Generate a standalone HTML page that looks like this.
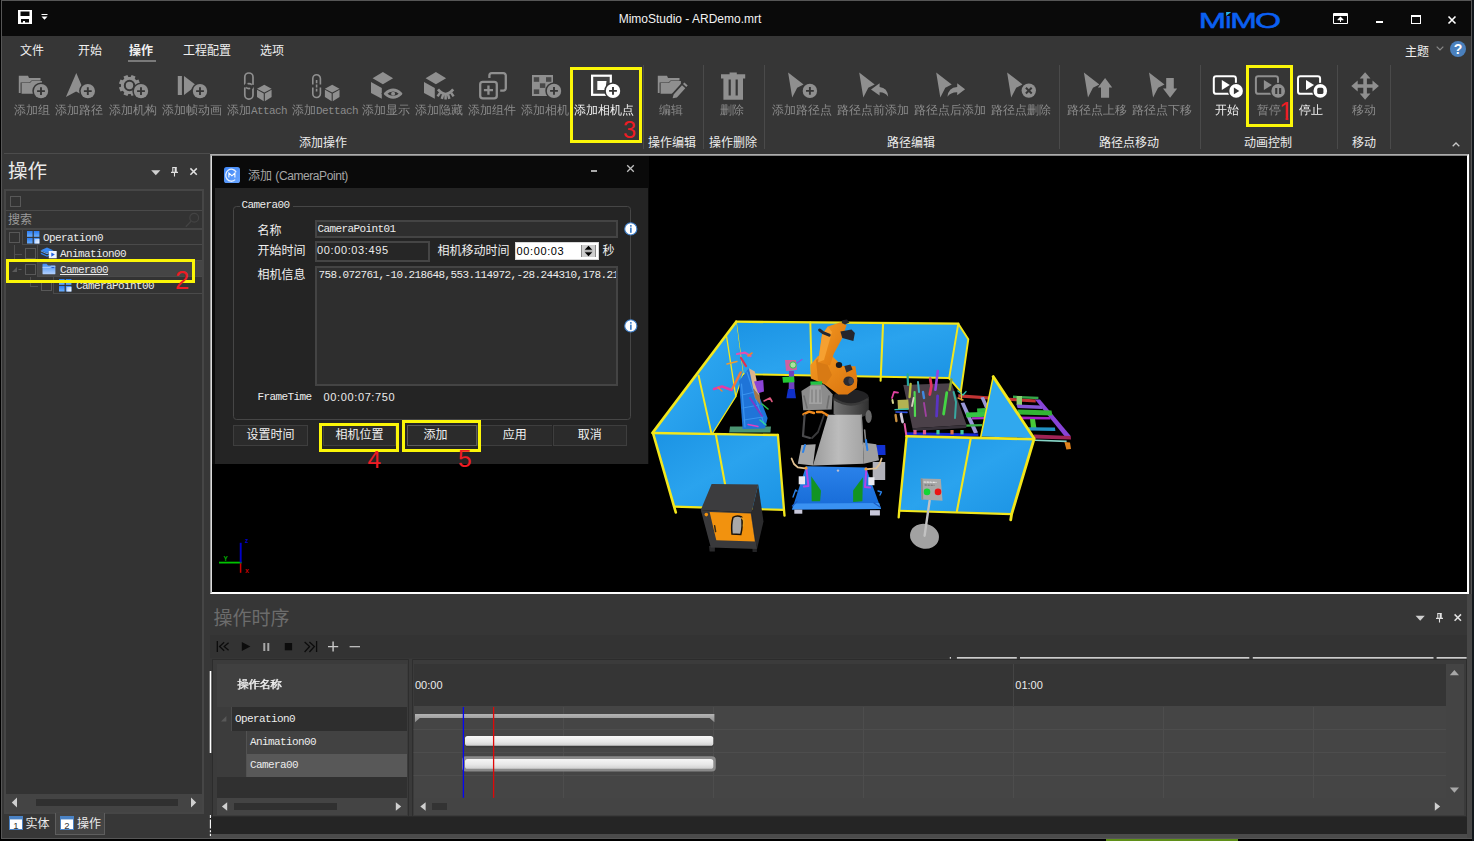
<!DOCTYPE html>
<html lang="zh-CN">
<head>
<meta charset="utf-8">
<title>MimoStudio - ARDemo.mrt</title>
<style>
*{box-sizing:border-box;margin:0;padding:0}
html,body{width:1474px;height:841px;overflow:hidden;background:#000}
body{position:relative;font-family:"Liberation Sans","Noto Sans CJK SC",sans-serif;font-size:12px;color:#e6e6e6;line-height:1}
.abs{position:absolute}
.cj{font-family:"Liberation Mono","WenQuanYi Zen Hei","Noto Sans CJK SC",monospace}
.mono{font-family:"Liberation Mono","WenQuanYi Zen Hei",monospace;font-size:11px;letter-spacing:-0.6px}
.lt{font-size:11px;letter-spacing:-0.6px}
#win{position:absolute;left:1px;top:0;width:1471px;height:839px;background:#353535;border:1px solid #565656}
/* everything inside #app is positioned in page coordinates */
#app{position:absolute;left:-2px;top:-1px;width:1474px;height:841px}
#titlebar{left:2px;top:1px;width:1469px;height:35px;background:#0a0a0a}
#ribbon{left:2px;top:36px;width:1469px;height:117px;background:#363636}
.tab{position:absolute;top:44px;height:14px;font-size:12px;line-height:14px;color:#f0f0f0;white-space:nowrap}
.rb{position:absolute;top:104px;height:14px;line-height:14px;font-size:12px;color:#8a8a8a;white-space:nowrap;transform:translateX(-50%);text-align:center}
.rb.on{color:#f2f2f2}
.gl{position:absolute;top:136px;height:14px;line-height:14px;font-size:12px;color:#ececec;white-space:nowrap;transform:translateX(-50%)}
.sep{position:absolute;top:65px;width:1px;height:84px;background:#4a4a4a}
.ybox{position:absolute;border:3px solid #fbf608}
.rnum{position:absolute;color:#ee1c24;font-family:"Liberation Sans",sans-serif;white-space:nowrap}

#left{left:2px;top:153px;width:208px;height:685px;background:#373737}
.cb{position:absolute;width:11px;height:11px;border:1px solid #585858;background:#333}
.hl{position:absolute;height:1px;background:#4a4a4a}
.vl{position:absolute;width:1px;background:#4a4a4a}
.tt{position:absolute;height:12px;line-height:12px;white-space:nowrap;color:#ececec}

.dl{position:absolute;height:14px;line-height:14px;font-size:12px;color:#f0f0f0;white-space:nowrap}
.btn{position:absolute;top:425px;height:21px;background:#2b2b2b;border:1px solid #3e3e3e;color:#f0f0f0;font-size:12px;line-height:19px;text-align:center}
.num{position:absolute;font-family:"Liberation Sans",sans-serif;font-size:11px;letter-spacing:0.62px;white-space:nowrap;height:12px;line-height:12px}
svg{position:absolute;overflow:visible}
</style>
</head>
<body>
<div class="abs" style="left:1106px;top:839px;width:132px;height:2px;background:#5f8f18"></div>
<div class="abs" style="left:1472px;top:0;width:2px;height:841px;background:#12171c"></div>
<div id="win"><div id="app">

<!-- TITLE BAR -->
<div id="titlebar" class="abs"></div>

<!-- save icon -->
<svg class="abs" style="left:18px;top:10px" width="14" height="14" viewBox="0 0 14 14"><path fill="#fff" fill-rule="evenodd" d="M0 0H14V14H0ZM2.5 1.5V6H11.5V1.5ZM3 9V12.5H5V11H7V12.5H11V9Z"/></svg>
<svg class="abs" style="left:41px;top:14px" width="7" height="6" viewBox="0 0 7 6"><path fill="#fff" d="M0.5 0H6.5V1H0.5ZM0.5 2.5H6.5L3.5 5.7Z"/></svg>
<div class="abs" style="left:540px;top:11px;width:300px;height:16px;line-height:16px;text-align:center;font-size:12px;color:#f2f2f2;white-space:nowrap">MimoStudio - ARDemo.mrt</div>
<!-- MiMO logo -->
<svg class="abs" style="left:1201px;top:8px" width="80" height="24" viewBox="0 0 80 24">
 <g font-family="Liberation Sans,sans-serif" font-size="22.3" fill="#0b60f2" stroke="#0b60f2" stroke-width="0.55">
  <text transform="translate(-2.2,20.2) scale(1.47,1)">M</text>
  <text transform="translate(24.4,20.2) scale(1.15,1)">i</text>
  <text transform="translate(29.3,20.2) scale(1.43,1)">M</text>
  <text transform="translate(53.9,20.2) scale(1.5,0.975)">O</text>
 </g>
 <rect x="24.3" y="3" width="6" height="4.9" fill="#0a0a0a"/>
 <path d="M25.1 4H30.2L25.1 8Z" fill="#25b4e8"/>
</svg>
<!-- window buttons -->
<svg class="abs" style="left:1333px;top:13px" width="15" height="11" viewBox="0 0 15 11"><path fill="none" stroke="#fff" stroke-width="1" d="M0.5 0.5H14.5V10.5H0.5Z"/><path fill="#fff" d="M1 1H14V3H1ZM7 4H8V9H7ZM4.5 6.5L7.5 3.5L10.5 6.5V7.2H4.5Z"/></svg>
<div class="abs" style="left:1376px;top:21px;width:7px;height:2px;background:#fff"></div>
<div class="abs" style="left:1411px;top:15px;width:10px;height:9px;border:1px solid #fff;border-top-width:2px"></div>
<svg class="abs" style="left:1448px;top:16px" width="8" height="8" viewBox="0 0 8 8"><path stroke="#fff" stroke-width="1.6" d="M0.5 0.5L7.5 7.5M7.5 0.5L0.5 7.5"/></svg>
<!--TITLE-CONTENT-->

<!-- RIBBON -->
<div id="ribbon" class="abs"></div>
<div class="tab" style="left:20px">文件</div>
<div class="tab" style="left:78px">开始</div>
<div class="tab" style="left:129px;font-weight:bold">操作</div>
<div class="tab" style="left:183px">工程配置</div>
<div class="tab" style="left:260px">选项</div>
<div class="abs" style="left:128px;top:60px;width:28px;height:2px;background:#7a7a7a"></div>
<div class="rb cj" style="left:32px">添加组</div>
<div class="rb cj" style="left:79px">添加路径</div>
<div class="rb cj" style="left:133px">添加机构</div>
<div class="rb cj" style="left:192px">添加帧动画</div>
<div class="rb cj" style="left:257px">添加<span class="lt">Attach</span></div>
<div class="rb cj" style="left:325px">添加<span class="lt">Dettach</span></div>
<div class="rb cj" style="left:386px">添加显示</div>
<div class="rb cj" style="left:439px">添加隐藏</div>
<div class="rb cj" style="left:492px">添加组件</div>
<div class="rb cj" style="left:545px">添加相机</div>
<div class="rb cj on" style="left:604px">添加相机点</div>
<div class="rb cj" style="left:671px">编辑</div>
<div class="rb cj" style="left:732px">删除</div>
<div class="rb cj" style="left:802px">添加路径点</div>
<div class="rb cj" style="left:873px">路径点前添加</div>
<div class="rb cj" style="left:950px">路径点后添加</div>
<div class="rb cj" style="left:1021px">路径点删除</div>
<div class="rb cj" style="left:1097px">路径点上移</div>
<div class="rb cj" style="left:1162px">路径点下移</div>
<div class="rb cj on" style="left:1227px">开始</div>
<div class="rb cj" style="left:1269px">暂停</div>
<div class="rb cj on" style="left:1311px">停止</div>
<div class="rb cj" style="left:1364px">移动</div>
<div class="gl" style="left:323px">添加操作</div>
<div class="gl" style="left:672px">操作编辑</div>
<div class="gl" style="left:733px">操作删除</div>
<div class="gl" style="left:911px">路径编辑</div>
<div class="gl" style="left:1129px">路径点移动</div>
<div class="gl" style="left:1268px">动画控制</div>
<div class="gl" style="left:1364px">移动</div>
<div class="sep" style="left:643px"></div>
<div class="sep" style="left:703px"></div>
<div class="sep" style="left:764px"></div>
<div class="sep" style="left:1059px"></div>
<div class="sep" style="left:1200px"></div>
<div class="sep" style="left:1337px"></div>
<div class="sep" style="left:1390px"></div>
<div class="abs" style="left:1405px;top:45px;height:14px;line-height:14px;font-size:12px;color:#f0f0f0">主题</div>
<svg class="abs" style="left:1436px;top:46px" width="8" height="5" viewBox="0 0 8 5"><path fill="none" stroke="#8a8a8a" stroke-width="1.2" d="M0.7 0.7L4 4L7.3 0.7"/></svg>
<svg class="abs" style="left:1450px;top:41px" width="16" height="16" viewBox="0 0 16 16"><circle cx="8" cy="8" r="8" fill="#4a80bd"/><text x="8" y="13" text-anchor="middle" font-family="Liberation Sans,sans-serif" font-weight="bold" font-size="14" fill="#fff">?</text></svg>
<svg class="abs" style="left:1452px;top:142px" width="8" height="5" viewBox="0 0 8 5"><path fill="none" stroke="#c8c8c8" stroke-width="1.3" d="M0.7 4.3L4 1L7.3 4.3"/></svg>
<div class="ybox" style="left:569.5px;top:67px;width:72.8px;height:75.5px"></div>
<div class="rnum" style="left:623px;top:118px;font-size:23.5px;line-height:24px">3</div>
<div class="ybox" style="left:1246px;top:65px;width:47.3px;height:62px"></div>
<div class="rnum" style="left:1279px;top:98px;font-size:25.5px;line-height:26px;clip-path:polygon(0 0,100% 0,100% 19.8px,9.4px 19.8px,9.4px 100%,6.6px 100%,6.6px 19.8px,0 19.8px)">1</div>
<!--RIBBON-ICONS-START-->
<svg class="abs" style="left:0;top:0" width="1474" height="160" viewBox="0 0 1474 160">
<g transform="translate(16,68)" fill="#8f8f8f"><path d="M2.8 25.1V7.8H12L13 9.9H24.5V12.4H15.5L13.6 14.4H4.6V25.1Z"/><path d="M5.6 15H13.9L15.8 13H25.9V25.8H5.6Z"/></g>
<circle cx="41" cy="91.1" r="8.7" fill="#363636"/><circle cx="41" cy="91.1" r="7.2" fill="#8f8f8f"/><path d="M37.1 91.1H44.9M41 87.19999999999999V95.0" stroke="#363636" stroke-width="1.9" fill="none"/>
<path fill="#8f8f8f" d="M76.3 73.1L65.9 97.1L76.1 91.6L86.5 97.1Z"/>
<circle cx="87.8" cy="91.1" r="8.7" fill="#363636"/><circle cx="87.8" cy="91.1" r="7.2" fill="#8f8f8f"/><path d="M83.89999999999999 91.1H91.7M87.8 87.19999999999999V95.0" stroke="#363636" stroke-width="1.9" fill="none"/>
<path fill="#8f8f8f" d="M131.61 74.91L135.50 76.52L134.72 78.66L136.34 80.28L138.48 79.50L140.09 83.39L138.02 84.36L138.02 86.64L140.09 87.61L138.48 91.50L136.34 90.72L134.72 92.34L135.50 94.48L131.61 96.09L130.64 94.02L128.36 94.02L127.39 96.09L123.50 94.48L124.28 92.34L122.66 90.72L120.52 91.50L118.91 87.61L120.98 86.64L120.98 84.36L118.91 83.39L120.52 79.50L122.66 80.28L124.28 78.66L123.50 76.52L127.39 74.91L128.36 76.98L130.64 76.98Z"/><circle cx="129.5" cy="85.5" r="4.7" fill="#8f8f8f" stroke="#363636" stroke-width="2"/>
<circle cx="141" cy="91.1" r="8.7" fill="#363636"/><circle cx="141" cy="91.1" r="7.2" fill="#8f8f8f"/><path d="M137.1 91.1H144.9M141 87.19999999999999V95.0" stroke="#363636" stroke-width="1.9" fill="none"/>
<path fill="#8f8f8f" d="M177.8 76H181.9V95H177.8ZM184 76L196.5 85.5L184 95Z"/>
<circle cx="200" cy="91.1" r="8.7" fill="#363636"/><circle cx="200" cy="91.1" r="7.2" fill="#8f8f8f"/><path d="M196.1 91.1H203.9M200 87.19999999999999V95.0" stroke="#363636" stroke-width="1.9" fill="none"/>
<g fill="none" stroke="#8f8f8f" stroke-width="1.7"><rect x="244.8" y="73" width="8.2" height="15.6" rx="4.1"/><rect x="244.8" y="83.6" width="8.2" height="15.6" rx="4.1"/></g><path d="M244.8 87.4A4.1 4.1 0 0 1 247.6 83.9" stroke="#363636" stroke-width="2.6" fill="none"/><path d="M253 84.8A4.1 4.1 0 0 1 250.2 88.3" stroke="#363636" stroke-width="2.6" fill="none"/>
<path fill="#8f8f8f" d="M264.3 84.8L271.6 88.7L264.3 92.6L257.0 88.7ZM257.0 89.8L263.75 93.5V101.19999999999999L257.0 97.10000000000001ZM271.6 89.8L264.85 93.5V101.19999999999999L271.6 97.10000000000001Z"/>
<g fill="none" stroke="#8f8f8f" stroke-width="1.6"><path d="M312.8 84.5V78.6A3.8 3.8 0 0 1 320.4 78.6V84.5"/><path d="M312.8 87.4V93.7A3.8 3.8 0 0 0 320.4 93.7V87.4"/><path d="M316.6 80V91.6" stroke-dasharray="3.2 1.2"/></g>
<path fill="#8f8f8f" d="M332.2 84.8L339.5 88.7L332.2 92.6L324.9 88.7ZM324.9 89.8L331.65 93.5V101.19999999999999L324.9 97.10000000000001ZM339.5 89.8L332.75 93.5V101.19999999999999L339.5 97.10000000000001Z"/>
<path fill="#8f8f8f" d="M382.9 71.9L393.1 78.3L382.9 84.2L372.6 78.3ZM371 82.1L381.8 88V98.8L371 93Z"/>
<path d="M383 93.7Q393.1 83.5 403.2 93.7Q393.1 103.9 383 93.7Z" fill="#363636" stroke="#363636" stroke-width="2.4"/><path d="M385.2 93.7Q393.1 86.3 401 93.7Q393.1 101.1 385.2 93.7Z" fill="none" stroke="#8f8f8f" stroke-width="2.7" stroke-linejoin="round"/><circle cx="393.1" cy="93.7" r="2" fill="#8f8f8f"/>
<path fill="#8f8f8f" d="M435.9 71.9L446.1 78.3L435.9 84.2L425.6 78.3ZM424 82.1L434.8 88V98.8L424 93Z"/>
<g fill="none" stroke="#8f8f8f" stroke-width="2.5" stroke-linecap="butt"><path d="M438 89.4Q445.6 98.6 453.2 89.4" stroke-width="2.7"/><path d="M440.2 92.6L437.6 96.4M443.2 94.4L441.8 98.8M445.6 95V99.6M448 94.4L449.4 98.8M451 92.6L453.6 96.4"/></g>
<g fill="none" stroke="#8f8f8f" stroke-width="2.3"><rect x="480.2" y="81.9" width="16.6" height="16.4" rx="2.6"/><path d="M489.4 78V75.6A2.4 2.4 0 0 1 491.8 73.2H503.4A2.4 2.4 0 0 1 505.8 75.6V88.2A2.4 2.4 0 0 1 503.4 90.6H500.2"/><path d="M483.9 90.1H493M488.45 85.5V94.7" stroke-width="2.3"/></g>
<rect x="532" y="75" width="21" height="21" fill="#8f8f8f"/><rect x="533.8" y="77.2" width="5.4" height="4.6" fill="#484848"/><rect x="546.0" y="77.2" width="5.4" height="4.6" fill="#484848"/><rect x="539.9" y="83.3" width="5.4" height="4.6" fill="#484848"/><rect x="533.8" y="89.4" width="5.4" height="4.6" fill="#484848"/><rect x="546.0" y="89.4" width="5.4" height="4.6" fill="#484848"/>
<circle cx="554" cy="90.9" r="8.7" fill="#363636"/><circle cx="554" cy="90.9" r="7.2" fill="#8f8f8f"/><path d="M550.1 90.9H557.9M554 87.0V94.80000000000001" stroke="#363636" stroke-width="1.9" fill="none"/>
<rect x="592.1" y="75.7" width="18.7" height="19.1" fill="#454545" stroke="#ffffff" stroke-width="2.2"/><path fill="#ffffff" d="M597.3 80.9H606.5L605.4 89.9H597.3Z"/>
<circle cx="613" cy="90.9" r="8.7" fill="#363636"/><circle cx="613" cy="90.9" r="7.2" fill="#ffffff"/><path d="M609.1 90.9H616.9M613 87.0V94.80000000000001" stroke="#363636" stroke-width="1.9" fill="none"/>
<g transform="translate(655,68)" fill="#8f8f8f"><path d="M2.8 25.1V7.8H12L13 9.9H24.5V12.4H15.5L13.6 14.4H4.6V25.1Z"/><path d="M5.6 15H13.9L15.8 13H25.9V25.8H5.6Z"/></g>
<path d="M672.2 98.6L686.3 83.2" stroke="#363636" stroke-width="7" fill="none"/><path d="M672.6 98.2L673.6 94.4L682 85.2L685.3 88.2L676.9 97.4ZM683 84.1L684.4 82.6L687.7 85.6L686.3 87.1Z" fill="#8f8f8f"/>
<path fill="#8f8f8f" fill-rule="evenodd" d="M721 74.2H729.6V72.4H736.8V74.2H745.2V78.4H721ZM723.4 78.4H743V99.7H723.4ZM728.6 79.6V95.5H730.8V79.6ZM735.6 79.6V95.5H737.8V79.6Z"/>
<path fill="#8f8f8f" d="M788.1 72.4L803.6 84.4L797.2 87.7L792.2 97.4Z"/>
<circle cx="809.9" cy="90.9" r="8.7" fill="#363636"/><circle cx="809.9" cy="90.9" r="7.2" fill="#8f8f8f"/><path d="M806.0 90.9H813.8M809.9 87.0V94.80000000000001" stroke="#363636" stroke-width="1.9" fill="none"/>
<path fill="#8f8f8f" d="M859.2 72.4L874.7 84.4L868.3000000000001 87.7L863.3000000000001 97.4Z"/>
<path d="M871 89.5L879.6 83.3V86.9Q887.6 87.6 888.2 96.8Q885.2 92.2 879.6 92.3V95.6Z" fill="#8f8f8f" stroke="#363636" stroke-width="1.4" paint-order="stroke"/>
<path fill="#8f8f8f" d="M936.2 72.4L951.7 84.4L945.3000000000001 87.7L940.3000000000001 97.4Z"/>
<path d="M965.1 89.2L957.2 83.3V86.9Q948.2 87.4 947.4 96.8Q950.6 92.2 957.2 92.3V95.3Z" fill="#8f8f8f" stroke="#363636" stroke-width="1.4" paint-order="stroke"/>
<path fill="#8f8f8f" d="M1007.1 72.4L1022.6 84.4L1016.2 87.7L1011.2 97.4Z"/>
<circle cx="1028.8" cy="90.6" r="8.7" fill="#363636"/><circle cx="1028.8" cy="90.6" r="7.2" fill="#8f8f8f"/><path d="M1025.8999999999999 87.69999999999999L1031.7 93.5M1031.7 87.69999999999999L1025.8999999999999 93.5" stroke="#363636" stroke-width="2" fill="none"/>
<path fill="#8f8f8f" d="M1083.9 72.4L1099.4 84.4L1093.0 87.7L1088.0 97.4Z"/>
<path d="M1105.1 78.1L1112.2 87.6H1109.1V97.7H1101V87.6H1097.9Z" fill="#8f8f8f" stroke="#363636" stroke-width="1.6" paint-order="stroke"/>
<path fill="#8f8f8f" d="M1149 72.4L1164.5 84.4L1158.1 87.7L1153.1 97.4Z"/>
<path d="M1166.2 78H1173.8V88.5H1177.2L1170.1 97.8L1163 88.5H1166.2Z" fill="#8f8f8f" stroke="#363636" stroke-width="1.6" paint-order="stroke"/>
<rect x="1213.8" y="76.2" width="22.1" height="17.6" rx="2.4" fill="none" stroke="#ffffff" stroke-width="2"/><path fill="#ffffff" d="M1221.8 80L1229.8 85L1221.8 90Z"/><circle cx="1236.1" cy="90.9" r="8.2" fill="#363636"/><circle cx="1236.1" cy="90.9" r="6.8" fill="#ffffff"/><path fill="#363636" d="M1233.8999999999999 87.60000000000001L1239.3 90.9L1233.8999999999999 94.2Z"/>
<rect x="1255.9" y="76.2" width="22.1" height="17.6" rx="2.4" fill="none" stroke="#8f8f8f" stroke-width="2"/><path fill="#8f8f8f" d="M1263.9 80L1271.9 85L1263.9 90Z"/><circle cx="1278.2" cy="90.9" r="8.2" fill="#363636"/><circle cx="1278.2" cy="90.9" r="6.8" fill="#8f8f8f"/><path fill="#363636" d="M1275.2 87.9H1277.3V93.9H1275.2ZM1279.1000000000001 87.9H1281.2V93.9H1279.1000000000001Z"/>
<rect x="1298" y="76.2" width="22.1" height="17.6" rx="2.4" fill="none" stroke="#ffffff" stroke-width="2"/><path fill="#ffffff" d="M1306 80L1314 85L1306 90Z"/><circle cx="1320.3" cy="90.9" r="8.2" fill="#363636"/><circle cx="1320.3" cy="90.9" r="6.8" fill="#ffffff"/><rect x="1317.2" y="87.80000000000001" width="6.2" height="6.2" rx="1.6" fill="#363636"/>
<path fill="#8f8f8f" d="M1365.1 72.2L1370.5 78.6H1366.8999999999999V84.2H1372.5V80.6L1378.8999999999999 86L1372.5 91.4V87.8H1366.8999999999999V93.4H1370.5L1365.1 99.8L1359.6999999999998 93.4H1363.3V87.8H1357.6999999999998V91.4L1351.3 86L1357.6999999999998 80.6V84.2H1363.3V78.6H1359.6999999999998Z"/>
</svg>
<!--RIBBON-ICONS-END-->
<!--RIBBON-CONTENT-->

<!-- LEFT PANEL -->

<svg width="0" height="0" style="left:0;top:0"><defs>
<linearGradient id="gb" x1="0" y1="0" x2="0" y2="1"><stop offset="0" stop-color="#2a7cf2"/><stop offset="1" stop-color="#6aaeff"/></linearGradient>
<linearGradient id="gf" x1="0" y1="0" x2="0" y2="1"><stop offset="0" stop-color="#3f8df6"/><stop offset="1" stop-color="#b5d2ff"/></linearGradient>
<linearGradient id="gw" x1="0" y1="0" x2="1" y2="1"><stop offset="0" stop-color="#9cc4ff"/><stop offset="1" stop-color="#ffffff"/></linearGradient>
</defs></svg>
<div id="left" class="abs"></div>
<div class="hl" style="left:4px;top:153px;width:206px;background:#4c4c4c"></div>
<div class="abs" style="left:8px;top:160px;font-size:19.5px;line-height:22px;color:#eaeaea;white-space:nowrap">操作</div>
<svg style="left:150px;top:165px" width="50" height="14" viewBox="0 0 50 14">
 <path d="M1.2 5.2H10.4L5.8 10.2Z" fill="#d0d0d0"/>
 <path d="M22.2 2.5H26.8M22.8 2.5V7.2M26.2 2.5V7.2M25.2 2.5V7.2M21 7.4H28M24.5 7.4V11.6" stroke="#e0e0e0" stroke-width="1.1" fill="none"/>
 <path d="M40.4 3.4L46.8 9.8M46.8 3.4L40.4 9.8" stroke="#e0e0e0" stroke-width="1.5" fill="none"/>
</svg>
<!-- tree box -->
<div class="abs" style="left:4px;top:189px;width:200px;height:625px;border:2px solid #464646;background:#333"></div>
<div class="cb" style="left:10px;top:196px"></div>
<div class="hl" style="left:6px;top:210px;width:196px"></div>
<div class="tt" style="left:8px;top:214px;color:#9a9a9a">搜索</div>
<svg style="left:185px;top:212px" width="15" height="16" viewBox="0 0 15 16"><circle cx="9.2" cy="5.8" r="4.4" fill="none" stroke="#434343" stroke-width="1.2"/><path d="M6 9.2L0.8 14.8" stroke="#434343" stroke-width="1.4"/></svg>
<div class="hl" style="left:6px;top:228px;width:196px;height:2px;background:#464646"></div>
<!-- row 1 -->
<div class="cb" style="left:9px;top:232px"></div>
<div class="vl" style="left:22px;top:230px;height:15px"></div>
<div class="hl" style="left:22px;top:244px;width:180px"></div>
<svg style="left:26.8px;top:230.6px" width="13" height="13" viewBox="0 0 13 13"><rect x="0" y="0" width="5.6" height="5.8" fill="url(#gb)"/><rect x="6.8" y="0" width="5.6" height="5.8" fill="url(#gb)"/><rect x="0" y="6.9" width="5.6" height="5.6" fill="url(#gb)"/><rect x="6.8" y="6.9" width="5.6" height="5.6" fill="#4a92f5"/><rect x="7.6" y="8" width="4.8" height="4.5" fill="url(#gw)"/></svg>

<div class="tt mono" style="left:43px;top:232px">Operation0</div>
<!-- row 2 -->
<div class="vl" style="left:14px;top:245px;height:16px;background:#505050"></div>
<div class="hl" style="left:14px;top:254px;width:8px;background:#505050"></div>
<div class="cb" style="left:25px;top:248px"></div>
<div class="vl" style="left:37px;top:245px;height:16px"></div>
<div class="hl" style="left:37px;top:260px;width:165px"></div>
<svg style="left:40px;top:247px" width="18" height="12" viewBox="0 0 18 12"><path d="M0.8 3.2L7 0.4L13.2 3.2L7 6Z" fill="#3a8af5"/><path d="M0.8 5.6L7 8.4L13.2 5.6V7L7 9.8L0.8 7Z" fill="#2f80f0"/><path d="M0.8 3.9L7 6.7L13.2 3.9" fill="none" stroke="#6aaeff" stroke-width="0.9"/><rect x="8.8" y="4" width="7.9" height="7.3" fill="#eef4ff"/><path d="M11.3 5.4L14.8 7.6L11.3 9.8Z" fill="#1f5fe0"/></svg>

<div class="tt mono" style="left:60px;top:248px">Animation00</div>
<!-- row 3 selected -->
<div class="abs" style="left:38px;top:261px;width:164px;height:16px;background:#454545"></div>
<svg style="left:12px;top:267px" width="10" height="6" viewBox="0 0 10 6"><path d="M0 5L5 0V5Z" fill="#5a5a5a"/><path d="M6.5 2.5H9.5" stroke="#5a5a5a" stroke-width="1"/></svg>
<div class="cb" style="left:25px;top:264px"></div>
<div class="vl" style="left:37px;top:261px;height:16px"></div>
<div class="hl" style="left:37px;top:276px;width:165px"></div>
<svg style="left:42px;top:263px" width="14" height="12" viewBox="0 0 14 12"><path d="M0.5 1.6Q0.5 0.7 1.4 0.7H4.6L6 2.4H12.6Q13.4 2.4 13.4 3.2V10.4Q13.4 11.3 12.6 11.3H1.4Q0.5 11.3 0.5 10.4Z" fill="url(#gf)"/><path d="M0.5 4.4H8L9.4 3.2H13.4" fill="none" stroke="#d6e6ff" stroke-width="0.8" opacity="0.8"/><path d="M9.6 4.6H12.2" stroke="#1f55d0" stroke-width="1"/></svg>

<div class="tt mono" style="left:60px;top:264px;text-decoration:underline;text-underline-offset:1px">Camera00</div>
<!-- row 4 -->
<div class="vl" style="left:30px;top:277px;height:10px;background:#505050"></div>
<div class="hl" style="left:30px;top:286px;width:8px;background:#505050"></div>
<div class="cb" style="left:41px;top:280px"></div>
<div class="vl" style="left:53px;top:277px;height:17px"></div>
<div class="hl" style="left:53px;top:293px;width:149px"></div>
<svg style="left:59px;top:278.6px" width="13" height="13" viewBox="0 0 13 13"><rect x="0" y="0" width="5.6" height="5.8" fill="url(#gb)"/><rect x="6.8" y="0" width="5.6" height="5.8" fill="url(#gb)"/><rect x="0" y="6.9" width="5.6" height="5.6" fill="url(#gb)"/><rect x="6.8" y="6.9" width="5.6" height="5.6" fill="#4a92f5"/><rect x="7.6" y="8" width="4.8" height="4.5" fill="url(#gw)"/></svg>

<div class="tt mono" style="left:76px;top:280px">CameraPoint00</div>
<div class="ybox" style="left:6px;top:259px;width:189px;height:23.5px"></div>
<div class="rnum" style="left:175px;top:267px;font-size:25.5px;line-height:26px">2</div>
<!-- h scroll -->
<div class="abs" style="left:6px;top:794px;width:196px;height:18px;background:#444"></div>
<div class="abs" style="left:36px;top:799px;width:142px;height:7px;background:#303030"></div>
<svg style="left:11px;top:797px" width="186" height="11" viewBox="0 0 186 11"><path d="M6 0.5V10.5L0.8 5.5Z" fill="#d0d0d0"/><path d="M180 0.5V10.5L185.2 5.5Z" fill="#d0d0d0"/></svg>
<!-- tabs -->
<div class="abs" style="left:55px;top:813px;width:50px;height:22px;background:#444;border:1px solid #5e5e5e;border-top:none"></div>
<svg style="left:9px;top:816px" width="66" height="14" viewBox="0 0 66 14"><rect x="0.5" y="0.5" width="13" height="13" fill="#fff" stroke="#4a82c4"/><rect x="0" y="0" width="14" height="3.4" fill="#4a82c4"/><text x="7" y="12.6" text-anchor="middle" font-family="Liberation Sans,sans-serif" font-size="9.5" fill="#333">1</text>
<rect x="51.5" y="0.5" width="13" height="13" fill="#fff" stroke="#4a82c4"/><rect x="51" y="0" width="14" height="3.4" fill="#4a82c4"/><text x="58" y="12.6" text-anchor="middle" font-family="Liberation Sans,sans-serif" font-size="9.5" fill="#333">2</text></svg>

<div class="tt" style="left:25.5px;top:818px">实体</div>
<div class="tt" style="left:77px;top:818px">操作</div>
<!--LEFT-CONTENT-->

<!-- VIEWPORT -->

<div class="abs" style="left:210px;top:154px;width:1259px;height:440px;background:#000;border-style:solid;border-width:2px;border-color:#acacac #fff #fff #9a9a9a"></div>
<div class="abs" style="left:211px;top:155px;width:1256px;height:437px;border-top:1px solid #858585;border-left:1px solid #dcdcdc"></div>
<!--SCENE-START-->
<svg style="left:640px;top:300px;filter:blur(0.35px)" width="460" height="270" viewBox="640 300 460 270">
<defs>
<linearGradient id="sb1" x1="0" y1="0" x2="1" y2="1"><stop offset="0" stop-color="#1b93e4"/><stop offset="0.5" stop-color="#2aa3ee"/><stop offset="1" stop-color="#1b93e4"/></linearGradient>
<linearGradient id="sb2" x1="0" y1="0" x2="0" y2="1"><stop offset="0" stop-color="#2ba6f0"/><stop offset="1" stop-color="#1c94e4"/></linearGradient>
<linearGradient id="sgray" x1="0" y1="0" x2="1" y2="0"><stop offset="0" stop-color="#9c9c9c"/><stop offset="0.5" stop-color="#bcbcbc"/><stop offset="1" stop-color="#a4a4a4"/></linearGradient>
<linearGradient id="scyl" x1="0" y1="0" x2="1" y2="0"><stop offset="0" stop-color="#707070"/><stop offset="0.45" stop-color="#565656"/><stop offset="1" stop-color="#303030"/></linearGradient>
<linearGradient id="sor" x1="0" y1="0" x2="1" y2="1"><stop offset="0" stop-color="#f59a22"/><stop offset="1" stop-color="#d9730e"/></linearGradient>
<linearGradient id="sblue" x1="0" y1="0" x2="0" y2="1"><stop offset="0" stop-color="#2a82ea"/><stop offset="1" stop-color="#166ad6"/></linearGradient>
</defs>
<polygon points="736.2,321.7 958.3,323.7 949.1,378.3 743,374" fill="url(#sb1)" />
<path d="M736.2 321.7L958.3 323.7" fill="none" stroke="#f3e71c" stroke-width="2.34" stroke-linejoin="round" stroke-linecap="round" />
<path d="M743 374.2L949.1 378" fill="none" stroke="#f3e71c" stroke-width="1.95" stroke-linejoin="round" stroke-linecap="round" />
<path d="M736.2 321.7L743 374" fill="none" stroke="#f3e71c" stroke-width="1.17" stroke-linejoin="round" stroke-linecap="round" />
<path d="M810.3 322.4L811.8 377" fill="none" stroke="#f3e71c" stroke-width="1.95" stroke-linejoin="round" stroke-linecap="round" />
<path d="M883.1 323L880.6 380.8" fill="none" stroke="#f3e71c" stroke-width="2.08" stroke-linejoin="round" stroke-linecap="round" />
<polygon points="958.3,323.7 968.3,339.2 960.8,391.6 949.1,378.3" fill="#31a9f0" />
<path d="M958.3 323.7L968.3 339.2L960.8 391.6L949.1 378.3L958.3 323.7" fill="none" stroke="#f3e71c" stroke-width="1.95" stroke-linejoin="round" stroke-linecap="round" />
<polygon points="736.2,321.7 652.5,432.9 712.9,432.9 735.8,396.6 743,374" fill="url(#sb1)" />
<path d="M736.2 321.7L652.5 432.9" fill="none" stroke="#f3e71c" stroke-width="2.6" stroke-linejoin="round" stroke-linecap="round" />
<path d="M726.6 336.6L735.8 396.6" fill="none" stroke="#f3e71c" stroke-width="1.3" stroke-linejoin="round" stroke-linecap="round" />
<path d="M698.6 375.8L711.3 432.9" fill="none" stroke="#f3e71c" stroke-width="1.95" stroke-linejoin="round" stroke-linecap="round" />
<path d="M743 374L735.8 396.6L712.9 432.9" fill="none" stroke="#f3e71c" stroke-width="1.17" stroke-linejoin="round" stroke-linecap="round" />
<polygon points="730,426.4 771,426.4 770.4,432.6 729.2,432.6" fill="#4b9472" />
<polygon points="739,381 748.6,368.6 767.6,418 765,428.4 742.6,429" fill="#1f74d8" />
<path d="M741.5 384L745 427" fill="none" stroke="#3a94f0" stroke-width="1.2" stroke-linejoin="round" stroke-linecap="round" />
<path d="M747 372L764 424" fill="none" stroke="#3a94f0" stroke-width="1.2" stroke-linejoin="round" stroke-linecap="round" />
<path d="M742 395L755 392" fill="none" stroke="#3a94f0" stroke-width="1" stroke-linejoin="round" stroke-linecap="round" />
<path d="M743 408L759 405" fill="none" stroke="#3a94f0" stroke-width="1" stroke-linejoin="round" stroke-linecap="round" />
<path d="M744 420L763 417" fill="none" stroke="#3a94f0" stroke-width="1" stroke-linejoin="round" stroke-linecap="round" />
<polygon points="749,368.3 754.8,371.6 759.8,396.6 753.2,388.3" fill="#dcb48e" />
<polygon points="753.2,388.3 759.8,396.6 760.6,405 755,398" fill="#a87848" />
<polygon points="754,381.6 763.2,380 764,391.6 758.2,393.3" fill="#8c44d6" />
<path d="M714 389L722 386.5L731.6 390" fill="none" stroke="#e23ca6" stroke-width="2.6" stroke-linejoin="round" stroke-linecap="round" />
<path d="M718 387.5L722 391" fill="none" stroke="#f08030" stroke-width="1.4" stroke-linejoin="round" stroke-linecap="round" />
<path d="M732.4 388.5L740.7 372.4" fill="none" stroke="#f2743c" stroke-width="2.4" stroke-linejoin="round" stroke-linecap="round" />
<path d="M727 364L737 361.5" fill="none" stroke="#f09a30" stroke-width="1.4" stroke-linejoin="round" stroke-linecap="round" />
<path d="M737 354L745 352.6L750.6 356" fill="none" stroke="#e050b0" stroke-width="2.2" stroke-linejoin="round" stroke-linecap="round" />
<path d="M741 358L746 366" fill="none" stroke="#e03050" stroke-width="2.2" stroke-linejoin="round" stroke-linecap="round" />
<path d="M748 356L752 353" fill="none" stroke="#f08030" stroke-width="1.6" stroke-linejoin="round" stroke-linecap="round" />
<path d="M764 401L770 398L772 401.5" fill="none" stroke="#e05a80" stroke-width="1.6" stroke-linejoin="round" stroke-linecap="round" />
<path d="M762 404L768 409" fill="none" stroke="#30c050" stroke-width="1.6" stroke-linejoin="round" stroke-linecap="round" />
<path d="M760 420L766 425" fill="none" stroke="#30d0a0" stroke-width="1.6" stroke-linejoin="round" stroke-linecap="round" />
<path d="M748 424.5L758 426.5" fill="none" stroke="#e040c0" stroke-width="1.4" stroke-linejoin="round" stroke-linecap="round" />
<path d="M750 398L762 416" fill="none" stroke="#7a3cc8" stroke-width="2" stroke-linejoin="round" stroke-linecap="round" />
<polygon points="785,360 796,360 797,370 786,371" fill="#d060a0" />
<circle cx="793" cy="365" r="3.2" fill="#b0e0a0" stroke="#30c050" stroke-width="1"/>
<path d="M797 363L802 359.5" fill="none" stroke="#9050e0" stroke-width="1.2" stroke-linejoin="round" stroke-linecap="round" />
<polygon points="789,371 794,371 794.6,394 788.6,394" fill="#7040c0" />
<polygon points="782.4,377 794,376.4 794.4,382.2 783,382.8" fill="#22c832" />
<polygon points="788,389 794.6,389 796,398.2 786.4,398.2" fill="#1030c8" />
<path d="M833.6 397V414Q850 424 868.8 414V397Z" fill="url(#scyl)"/>
<ellipse cx="868.6" cy="416.5" rx="3.2" ry="6.5" fill="#6a6a6a"/>
<ellipse cx="851" cy="397" rx="17.6" ry="7.6" fill="#222224"/>
<path d="M834 399Q851 410 868 399" fill="none" stroke="#3a3a3a" stroke-width="2.4"/>
<polygon points="810.3,364.9 818,356 829.2,353.2 842.3,366 855.4,366.2 857.4,380 856.7,388 847.6,394.4 838.4,394.4 824,384 810.9,378.4" fill="url(#sor)" />
<polygon points="816,360 824,356 832,375 826,384 818,380" fill="#d87a14" />
<polygon points="827.9,326.4 840.4,322.2 846.6,325 842.3,338.1 833.8,353.8 830,365.4 818.1,362.3 822,334.9" fill="url(#sor)" />
<polygon points="822,334.9 827.9,326.4 832,332 824,360 818.1,362.3" fill="#f6a030" />
<polygon points="840.4,331.6 851.5,329.4 854.9,332.9 853.4,341 842.3,338.1" fill="#26262c" />
<polygon points="842.3,320.2 847,319.4 849.4,322.4 845,324.6 841.6,323" fill="#26262c" />
<path d="M819.6 330L823 332.6L829.2 335.2" fill="none" stroke="#26262c" stroke-width="3" stroke-linejoin="round" stroke-linecap="round" />
<ellipse cx="839" cy="365" rx="3.2" ry="3" fill="#18181c"/>
<polygon points="844.3,366 850.5,364.6 852.6,369.6 846.4,372.4" fill="#2c2c32" />
<ellipse cx="848.6" cy="381.2" rx="5.2" ry="4.8" fill="#2a2a30"/>
<ellipse cx="851" cy="381" rx="2.6" ry="3.4" fill="#44444c"/>
<polygon points="810.3,381.6 822,381.3 822.4,385.4 810.6,385.6" fill="#22c444" />
<polygon points="801.4,391 811.2,384.8 823.7,384.6 832.6,394.3 831.7,409.6 803.2,410.3" fill="#8c8c8c" />
<polygon points="810,386 821,386 822,404 809,404" fill="#a2a2a2" />
<path d="M804 396L807 408" fill="none" stroke="#6e6e6e" stroke-width="1.6" stroke-linejoin="round" stroke-linecap="round" />
<path d="M829 396L827 408" fill="none" stroke="#6e6e6e" stroke-width="1.6" stroke-linejoin="round" stroke-linecap="round" />
<path d="M812 390L812 402" fill="none" stroke="#777" stroke-width="1" stroke-linejoin="round" stroke-linecap="round" />
<path d="M816 390L816 402" fill="none" stroke="#777" stroke-width="1" stroke-linejoin="round" stroke-linecap="round" />
<path d="M820 390L820 402" fill="none" stroke="#777" stroke-width="1" stroke-linejoin="round" stroke-linecap="round" />
<path d="M803.4 414.4L809 411.6L814 413" fill="none" stroke="#f08a1c" stroke-width="2.4" stroke-linejoin="round" stroke-linecap="round" />
<path d="M817 412L822 412L828 415.6" fill="none" stroke="#f08a1c" stroke-width="2.4" stroke-linejoin="round" stroke-linecap="round" />
<polygon points="958.3,394.2 1035.7,399.6 1035.7,402.6 958.3,397.6" fill="#c23434" />
<polygon points="1035,399.4 1040,399.4 1070.7,436 1066,438" fill="#8844d8" />
<polygon points="1013,395.6 1038.4,396.8 1038.4,399.2 1013,398" fill="#34a448" />
<polygon points="1016.6,396 1022,396 1022,405 1016.6,405" fill="#8cd070" />
<polygon points="1016.6,404.6 1041.5,405.6 1042.5,409 1017.6,408" fill="#8456d6" />
<polygon points="1017.4,409.6 1051.5,410.6 1052.4,415.4 1018.2,414.6" fill="#32b434" />
<polygon points="1018.2,416.4 1049.9,417 1050.6,419.6 1019,419.2" fill="#a422c6" />
<polygon points="1030,419 1035,419 1036.4,428 1031,428" fill="#48c838" />
<polygon points="1028.2,427.2 1054.9,427.6 1055.4,431 1028.6,430.6" fill="#2292c4" />
<polygon points="1034,434.6 1070.7,436 1071,439.6 1034.4,438.4" fill="#a02456" />
<polygon points="1035,439.4 1066.6,440.6 1066.6,442.2 1035,441" fill="#86d4c6" />
<polygon points="1064.4,442 1070,442.6 1071,449 1066.4,449.4" fill="#e0821c" />
<polygon points="960.6,403 964.4,402.4 978,432.4 974,433.4" fill="#9a98d6" />
<polygon points="980.4,397.6 984,397 989,408 985.4,409" fill="#9a98d6" />
<polygon points="977,408.4 986,408 986.4,413 977.4,413.4" fill="#30b840" />
<polygon points="966,412.6 985,412 985.4,416.8 966.4,417.4" fill="#34c444" />
<polygon points="972,417.2 984,417 984,419.2 972,419.6" fill="#b030c8" />
<polygon points="966,424.6 982,424 982,426.2 966,426.8" fill="#38b048" />
<path d="M958 391L963 395L966 391.6" fill="none" stroke="#30c0b0" stroke-width="1.4" stroke-linejoin="round" stroke-linecap="round" />
<path d="M961 389.6L961.6 400" fill="none" stroke="#d0d040" stroke-width="1.2" stroke-linejoin="round" stroke-linecap="round" />
<polygon points="906.6,432.2 978.3,433.4 978.3,436.2 906.6,436" fill="#1224d2" />
<polygon points="903.3,384.9 951.6,383.3 966.6,424.9 912.5,428.2" fill="#4b4149" />
<polygon points="912.5,428.2 966.6,424.9 966.2,428 913,431" fill="#38323a" />
<rect x="913.4" y="430" width="3.2" height="4.4" fill="#e05a90"/>
<rect x="922.9" y="430" width="3.2" height="4.4" fill="#e05a90"/>
<rect x="936.4" y="430" width="3.2" height="4.4" fill="#40c8a0"/>
<rect x="950.4" y="430" width="3.2" height="4.4" fill="#e07040"/>
<rect x="960.4" y="430" width="3.2" height="4.4" fill="#40c8a0"/>
<path d="M904.6 424L906.4 436" fill="none" stroke="#e45aa8" stroke-width="2" stroke-linejoin="round" stroke-linecap="round" />
<path d="M907.6 374.4L908 385" fill="none" stroke="#24a6a0" stroke-width="2.2" stroke-linejoin="round" stroke-linecap="round" />
<path d="M910.6 384L909.6 397" fill="none" stroke="#b8c040" stroke-width="2.4" stroke-linejoin="round" stroke-linecap="round" />
<path d="M918 382L919 392" fill="none" stroke="#40b0c0" stroke-width="2" stroke-linejoin="round" stroke-linecap="round" />
<path d="M930.2 378.6L931.4 386L929.8 394.6" fill="none" stroke="#e2345e" stroke-width="2.8" stroke-linejoin="round" stroke-linecap="round" />
<path d="M937.8 371L935.4 389.8" fill="none" stroke="#9444e2" stroke-width="2.6" stroke-linejoin="round" stroke-linecap="round" />
<path d="M946.8 392.6L943.6 414" fill="none" stroke="#44d444" stroke-width="2.8" stroke-linejoin="round" stroke-linecap="round" />
<path d="M937.6 396L936.6 416" fill="none" stroke="#5a34c2" stroke-width="2.8" stroke-linejoin="round" stroke-linecap="round" />
<path d="M951.4 379.4L949.6 390" fill="none" stroke="#84a432" stroke-width="2.4" stroke-linejoin="round" stroke-linecap="round" />
<path d="M953.6 392L956 402L955 418" fill="none" stroke="#38a8a0" stroke-width="2" stroke-linejoin="round" stroke-linecap="round" />
<path d="M923 392L924 398" fill="none" stroke="#4088e0" stroke-width="2.4" stroke-linejoin="round" stroke-linecap="round" />
<path d="M924 403L926 416" fill="none" stroke="#a040a0" stroke-width="1.8" stroke-linejoin="round" stroke-linecap="round" />
<path d="M914.6 392L915 416" fill="none" stroke="#50d850" stroke-width="2.2" stroke-linejoin="round" stroke-linecap="round" />
<path d="M913.6 398L912 406" fill="none" stroke="#d8d0c0" stroke-width="1.8" stroke-linejoin="round" stroke-linecap="round" />
<polygon points="897.5,400 908.3,399.6 909,409.6 898,410" fill="#b4b252" />
<path d="M892 398L894 392L898 392.6" fill="none" stroke="#e040a0" stroke-width="1.8" stroke-linejoin="round" stroke-linecap="round" />
<path d="M892.4 400L893 403" fill="none" stroke="#d8d890" stroke-width="2" stroke-linejoin="round" stroke-linecap="round" />
<path d="M895 409.6L908 409" fill="none" stroke="#30c0b0" stroke-width="1.4" stroke-linejoin="round" stroke-linecap="round" />
<path d="M896 412L907 412.4" fill="none" stroke="#3050e0" stroke-width="1.6" stroke-linejoin="round" stroke-linecap="round" />
<path d="M895.6 415L896.4 421" fill="none" stroke="#c89040" stroke-width="2.4" stroke-linejoin="round" stroke-linecap="round" />
<path d="M901 414L902.6 422" fill="none" stroke="#d0c8d8" stroke-width="2.8" stroke-linejoin="round" stroke-linecap="round" />
<path d="M958 398L963 400" fill="none" stroke="#e0a030" stroke-width="1.4" stroke-linejoin="round" stroke-linecap="round" />
<polygon points="993.2,376.6 1034,438.2 980.8,436.6" fill="#30a8ee" />
<path d="M980.8 436.6L993.2 376.6" fill="none" stroke="#f3e71c" stroke-width="1.56" stroke-linejoin="round" stroke-linecap="round" />
<path d="M993.2 376.6L1034 438.2" fill="none" stroke="#f3e71c" stroke-width="2.86" stroke-linejoin="round" stroke-linecap="round" />
<path d="M804.6 415L803 436L810 438" fill="none" stroke="#4a4a4c" stroke-width="2.2" stroke-linejoin="round" stroke-linecap="round" />
<path d="M824 415L818 432L812 438" fill="none" stroke="#3a3a3c" stroke-width="1.8" stroke-linejoin="round" stroke-linecap="round" />
<polygon points="876.3,445.1 885.2,445.1 885.6,455 876.6,455" fill="#1232d4" />
<polygon points="872.7,462 885.2,462 885.2,480 872.7,480" fill="#b2b2ba" />
<polygon points="801.4,445.1 815.7,444.2 813,465.6 797.8,463.8" fill="#a6a6a6" />
<polygon points="862.9,442.4 876.3,444.2 879,460.2 863.8,463.8" fill="#a0a0a0" />
<polygon points="828.1,414.8 862,414.8 863.8,463.8 813,465.6" fill="url(#sgray)" />
<path d="M861.2 414.8L862.8 444" fill="none" stroke="#8a8a8a" stroke-width="1.2" stroke-linejoin="round" stroke-linecap="round" />
<path d="M864.6 430L866 445" fill="none" stroke="#888" stroke-width="1.6" stroke-linejoin="round" stroke-linecap="round" />
<polygon points="806,466.3 866,467.4 881,509 792,509.6" fill="url(#sblue)" />
<polygon points="794.4,503.4 879.2,503 881,509 792,509.6" fill="#3a92f2" />
<path d="M805 445L803 452" fill="none" stroke="#2a82ea" stroke-width="2" stroke-linejoin="round" stroke-linecap="round" />
<path d="M866 440L867.4 450" fill="none" stroke="#2a82ea" stroke-width="2" stroke-linejoin="round" stroke-linecap="round" />
<polygon points="811.2,476.3 821,490.6 820.1,501.3 811.7,501.3" fill="#129422" />
<polygon points="862.9,477.2 853.1,490.6 853.1,502.1 862.4,501.3" fill="#129422" />
<path d="M806.4 468.4L808.4 486L804 486.6" fill="none" stroke="#b444e4" stroke-width="2" stroke-linejoin="round" stroke-linecap="round" />
<path d="M866.4 468.4L865 487L870 487.6" fill="none" stroke="#b444e4" stroke-width="2" stroke-linejoin="round" stroke-linecap="round" />
<polygon points="798.7,476.3 805,476.3 805,484.3 798.7,484.3" fill="#eaeaf0" />
<polygon points="868.3,477.2 874.5,477.2 874.5,485.2 868.3,485.2" fill="#eaeaf0" />
<path d="M791.6 458.5L794 464L797.8 467.4L805 468.3" fill="none" stroke="#e2c292" stroke-width="1.8" stroke-linejoin="round" stroke-linecap="round" />
<path d="M881.6 458.5L879.6 464L876.3 468.3L867.4 469.2" fill="none" stroke="#e2c292" stroke-width="1.8" stroke-linejoin="round" stroke-linecap="round" />
<circle cx="806" cy="468" r="1.6" fill="#f0a030"/><circle cx="866" cy="469" r="1.6" fill="#f0a030"/><circle cx="838" cy="470.6" r="1.2" fill="#c0c0d0"/>
<polygon points="794.3,509.6 802.3,509.6 802.3,513.7 794.3,513.7" fill="#c8c8da" />
<polygon points="870,510.2 879.9,510.2 879.9,515.5 870,515.5" fill="#c8c8da" />
<path d="M793 497L795.6 490L797 491" fill="none" stroke="#2a82ea" stroke-width="1.4" stroke-linejoin="round" stroke-linecap="round" />
<path d="M878 491L881.4 492L880 495" fill="none" stroke="#2a82ea" stroke-width="1.4" stroke-linejoin="round" stroke-linecap="round" />
<path d="M792.4 506L797 501.4" fill="none" stroke="#1c5cc0" stroke-width="1.2" stroke-linejoin="round" stroke-linecap="round" />
<path d="M874 503L880 507" fill="none" stroke="#1c5cc0" stroke-width="1.2" stroke-linejoin="round" stroke-linecap="round" />
<polygon points="653,433 777.9,435 784,509.9 674.1,506.6" fill="url(#sb1)" />
<path d="M653 433L777.9 435" fill="none" stroke="#f3e71c" stroke-width="2.34" stroke-linejoin="round" stroke-linecap="round" />
<path d="M674.1 506.6L784 509.9" fill="none" stroke="#f3e71c" stroke-width="2.08" stroke-linejoin="round" stroke-linecap="round" />
<path d="M653 433L674.1 506.6L675.8 512.4" fill="none" stroke="#f3e71c" stroke-width="2.6" stroke-linejoin="round" stroke-linecap="round" />
<path d="M777.9 435L784 509.9L784.5 515.7" fill="none" stroke="#f3e71c" stroke-width="2.34" stroke-linejoin="round" stroke-linecap="round" />
<path d="M715.8 434.2L724.9 483.3L729.5 508" fill="none" stroke="#f3e71c" stroke-width="2.08" stroke-linejoin="round" stroke-linecap="round" />
<polygon points="906.6,436.3 1034,439.2 1011.6,514.1 899.2,510.8" fill="url(#sb1)" />
<path d="M906.6 436.3L1034 439.2" fill="none" stroke="#f3e71c" stroke-width="2.6" stroke-linejoin="round" stroke-linecap="round" />
<path d="M899.2 510.8L1011.6 514.1" fill="none" stroke="#f3e71c" stroke-width="2.08" stroke-linejoin="round" stroke-linecap="round" />
<path d="M906.6 436.3L899.2 510.8L898.7 517.4" fill="none" stroke="#f3e71c" stroke-width="2.34" stroke-linejoin="round" stroke-linecap="round" />
<path d="M1034 439.2L1011.6 514.1L1010.7 519.9" fill="none" stroke="#f3e71c" stroke-width="2.86" stroke-linejoin="round" stroke-linecap="round" />
<path d="M970.8 438.3L956.9 511.3" fill="none" stroke="#f3e71c" stroke-width="2.08" stroke-linejoin="round" stroke-linecap="round" />
<polygon points="709.1,546 714.9,546 714.9,551.5 709.6,551.5" fill="#2a2a2c" />
<polygon points="752.4,548 756.9,546 756.9,551.9 752.6,551.9" fill="#242426" />
<polygon points="758.2,484.6 763.5,521.6 756.9,549.5 751.6,512.4" fill="#2b2b2d" />
<polygon points="700.8,509.9 751.6,512.4 756.9,549 710.8,547.6" fill="#39393b" />
<polygon points="709.6,511.9 750.7,513.6 754.9,541.5 716.3,540.2" fill="#f2920e" />
<polygon points="711.6,484.1 758.2,484.6 751.6,512.4 700.8,509.9" fill="#3c3c3e" />
<path d="M733 517.4Q731 524 732 534L740.8 534.4Q743 526 741.6 517Q737 514.6 733 517.4Z" fill="#a9a9a9" stroke="#1a1208" stroke-width="1.5"/>
<path d="M741.6 518L744 520L743.4 526" fill="none" stroke="#e8a020" stroke-width="1.4" stroke-linejoin="round" stroke-linecap="round" />
<circle cx="706.3" cy="514.6" r="1.8" fill="#f2920e"/>
<path d="M714.6 525.7L715.6 531.6" fill="none" stroke="#3a2a14" stroke-width="1.5" stroke-linejoin="round" stroke-linecap="round" />
<ellipse cx="924.5" cy="536.2" rx="14.6" ry="12.4" transform="rotate(14 924.5 536.2)" fill="#a2a2a2"/>
<path d="M929.6 500.8L924.6 535.7" fill="none" stroke="#c2c2c2" stroke-width="2.4" stroke-linejoin="round" stroke-linecap="round" />
<polygon points="920.8,478.6 940.8,479.1 942.5,500.8 921.6,499.6" fill="#a8a8a8" />
<polygon points="920.8,478.6 922.6,478.7 923.2,499.7 921.6,499.6" fill="#8c8c8c" />
<circle cx="927" cy="491.9" r="3.3" fill="#12d634"/><circle cx="938" cy="491.9" r="3.3" fill="#ea1414"/>
<path d="M924 482L936 482.4" fill="none" stroke="#e8e8e8" stroke-width="1.2" stroke-linejoin="round" stroke-linecap="round" stroke-dasharray="1.4 1.6"/>
<path d="M925 485L934 485.3" fill="none" stroke="#6a6a6a" stroke-width="1" stroke-linejoin="round" stroke-linecap="round" stroke-dasharray="1.4 1.6"/>
</svg>
<!--SCENE-END-->
<!-- axis gizmo -->
<svg style="left:215px;top:535px" width="40" height="42" viewBox="215 535 40 42">
 <path d="M219 562.6H241.6" stroke="#00c400" stroke-width="1.8"/>
 <path d="M240.7 542.8V562.6" stroke="#0000c8" stroke-width="1.9"/>
 <path d="M240.6 563.4V572.8" stroke="#d00000" stroke-width="1.5"/>
 <text x="223.6" y="561.4" font-family="Liberation Sans,sans-serif" font-size="6.5" font-weight="bold" fill="#00b000">Y</text>
 <text x="245" y="572.6" font-family="Liberation Sans,sans-serif" font-size="7" font-weight="bold" fill="#c00000">x</text>
 <text x="245" y="543" font-family="Liberation Sans,sans-serif" font-size="6.5" font-weight="bold" fill="#0000c8">z</text>
</svg>
<!--VIEWPORT-CONTENT-->

<!-- DIALOG -->

<div class="abs" style="left:212px;top:156px;width:437px;height:308px;background:#0a0a0a"></div>
<div class="abs" style="left:215px;top:188px;width:433px;height:275.5px;background:#242424"></div>
<!-- dialog icon -->
<svg style="left:224px;top:167px" width="16" height="16" viewBox="0 0 16 16"><defs><linearGradient id="gi" x1="0" y1="0" x2="1" y2="1"><stop offset="0" stop-color="#3f86f6"/><stop offset="1" stop-color="#6aa6ff"/></linearGradient></defs><rect width="16" height="16" rx="2.6" fill="url(#gi)"/><path d="M11.2 12.6A5.6 6 0 1 1 12.2 5.2" fill="none" stroke="#e6f0ff" stroke-width="1.3"/><path d="M4.9 10.4V6L7.9 8.8L10.9 6V10.4" fill="none" stroke="#fff" stroke-width="1.1"/></svg>
<div class="abs" style="left:248px;top:168px;height:16px;line-height:16px;font-size:12px;color:#a6a6a6;white-space:nowrap">添加 <span style="letter-spacing:-0.42px">(CameraPoint)</span></div>
<div class="abs" style="left:591px;top:169.6px;width:6px;height:2px;background:#aaa"></div>
<svg style="left:626px;top:164px" width="9" height="9" viewBox="0 0 9 9"><path d="M1.2 1.2L7.8 7.8M7.8 1.2L1.2 7.8" stroke="#c0c0c0" stroke-width="1.3" fill="none"/></svg>
<!-- group box -->
<div class="abs" style="left:233px;top:205.5px;width:398px;height:214px;border:1px solid #464646;border-radius:3.5px"></div>
<div class="abs mono" style="left:239.5px;top:199px;width:53px;height:13px;line-height:13px;background:#242424;color:#ececec;padding-left:2px">Camera00</div>
<!-- row 1 -->
<div class="dl" style="left:257.5px;top:224px">名称</div>
<div class="abs" style="left:315px;top:220px;width:303px;height:18px;background:#2e2e2e;border:2px solid #444"></div>
<div class="abs mono tt" style="left:317.5px;top:223px">CameraPoint01</div>
<!-- row 2 -->
<div class="dl" style="left:257.5px;top:244px">开始时间</div>
<div class="abs" style="left:314.5px;top:241.3px;width:115.5px;height:20.3px;background:#262626;border:2px solid #454545"></div>
<div class="num" style="left:317px;top:244px;color:#ececec">00:00:03:495</div>
<div class="dl" style="left:437.5px;top:244px">相机移动时间</div>
<div class="abs" style="left:515px;top:242px;width:84px;height:18px;background:#fff;border:1px solid #d8d8d8"></div>
<div class="num" style="left:516.5px;top:245px;color:#000">00:00:03</div>
<div class="abs" style="left:581px;top:245px;width:15.4px;height:12px;background:#cfcfcf;border-left:1.3px solid #8a8a8a;border-right:1.3px solid #8a8a8a"></div>
<svg style="left:584px;top:245px" width="9" height="12" viewBox="0 0 9 12"><path d="M4.5 0.8L8.3 4.8H0.7Z" fill="#000"/><path d="M0.5 6.05H8.5" stroke="#8a8a8a" stroke-width="0.9"/><path d="M4.5 11.2L8.3 7.2H0.7Z" fill="#000"/></svg>
<div class="dl" style="left:602.5px;top:244px">秒</div>
<!-- row 3 -->
<div class="dl" style="left:257.5px;top:268px">相机信息</div>
<div class="abs" style="left:315px;top:266px;width:303px;height:119.6px;background:#2e2e2e;border:2px solid #444"></div>
<div class="abs mono tt" style="left:318.5px;top:269px;width:297px;overflow:hidden">758.072761,-10.218648,553.114972,-28.244310,178.21</div>
<!-- info icons -->
<svg style="left:624px;top:222px" width="14" height="14" viewBox="0 0 14 14"><circle cx="6.8" cy="6.9" r="6.1" fill="#fff" stroke="#3c7cc6" stroke-width="1.1"/><rect x="6" y="5.6" width="1.7" height="5.2" fill="#3c7cc6"/><rect x="6" y="3.1" width="1.7" height="1.6" fill="#3c7cc6"/></svg>
<svg style="left:624px;top:319px" width="14" height="14" viewBox="0 0 14 14"><circle cx="6.8" cy="6.9" r="6.1" fill="#fff" stroke="#3c7cc6" stroke-width="1.1"/><rect x="6" y="5.6" width="1.7" height="5.2" fill="#3c7cc6"/><rect x="6" y="3.1" width="1.7" height="1.6" fill="#3c7cc6"/></svg>
<div class="abs mono tt" style="left:257.5px;top:391px">FrameTime</div>
<div class="num" style="left:323.6px;top:391px;color:#ececec">00:00:07:750</div>
<!-- buttons -->
<div class="btn" style="left:233px;width:75px">设置时间</div>
<div class="btn" style="left:322.7px;width:73.5px">相机位置</div>
<div class="btn" style="left:406.5px;width:70.5px;border-color:#5c5c5c;text-align:left;padding-left:16px">添加</div>
<div class="btn" style="left:477px;width:74.5px;border-right:none">应用</div>
<div class="btn" style="left:552.5px;width:74.5px">取消</div>
<div class="ybox" style="left:319px;top:422.7px;width:80px;height:29.2px"></div>
<div class="ybox" style="left:402px;top:420px;width:79.2px;height:31.8px"></div>
<div class="rnum" style="left:367.5px;top:447px;font-size:24.5px;line-height:26px">4</div>
<div class="rnum" style="left:458px;top:446px;font-size:24.5px;line-height:26px">5</div>
<!--DIALOG-CONTENT-->

<!-- TIMELINE -->

<div class="abs" style="left:210px;top:594px;width:1261px;height:244px;background:#363636"></div>
<div class="abs" style="left:210px;top:594px;width:1261px;height:6px;background:#3b3b3b"></div>
<div class="abs" style="left:213.5px;top:607px;font-size:19px;line-height:24px;color:#6c6c6c;white-space:nowrap">操作时序</div>
<svg style="left:1414px;top:611px" width="50" height="14" viewBox="0 0 50 14">
 <path d="M1.6 4.8H10.8L6.2 9.8Z" fill="#d0d0d0"/>
 <path d="M23.2 2.5H27.8M23.8 2.5V7.2M27.2 2.5V7.2M26.2 2.5V7.2M22 7.4H29M25.5 7.4V11.6" stroke="#e0e0e0" stroke-width="1.1" fill="none"/>
 <path d="M40.6 3.4L47 9.8M47 3.4L40.6 9.8" stroke="#e0e0e0" stroke-width="1.5" fill="none"/>
</svg>
<!-- toolbar -->
<div class="abs" style="left:210px;top:635px;width:1259px;height:23px;background:#333"></div>
<svg style="left:210px;top:636px" width="160" height="22" viewBox="210 636 160 22">
 <g fill="none" stroke="#0c0c0c" stroke-width="1.3">
  <path d="M217.3 641V652"/><path d="M224.2 642.2L219.6 646.5L224.2 650.8M228.6 642.8L224.2 646.5L228.6 650.2"/>
  <path d="M316.6 641V652"/><path d="M304.6 642L309.6 646.5L304.6 652M309.4 642L314.4 646.5L309.4 652"/>
 </g>
 <path d="M241.8 642V651L250.4 646.5Z" fill="#0c0c0c"/>
 <path d="M263.3 643H265.3V651H263.3ZM267.3 643H269.3V651H267.3Z" fill="#a8a8a8"/>
 <rect x="284.8" y="643" width="7.3" height="7.3" fill="#0c0c0c"/>
 <path d="M328 646.6H338.2M333.1 641.6V651.6" stroke="#cacaca" stroke-width="1.4" fill="none"/>
 <path d="M349.6 646.7H360" stroke="#cacaca" stroke-width="1.2" fill="none"/>
</svg>
<!-- grid frame -->
<div class="abs" style="left:211.5px;top:658.5px;width:1255.5px;height:158px;background:#3b3b3b;border:1px solid #2c2c2c"></div>
<div class="abs" style="left:407.5px;top:659px;width:5.5px;height:157px;background:#3a3a3a;border-left:1px solid #2e2e2e;border-right:1px solid #2e2e2e"></div>
<!-- left grid -->
<div class="abs" style="left:216.5px;top:663.5px;width:190.5px;height:43px;background:#404040"></div>
<div class="abs cj" style="left:237px;top:678px;height:14px;line-height:14px;font-size:11.5px;color:#ececec;white-space:nowrap;letter-spacing:-0.5px;text-shadow:0.7px 0 0 #ececec">操作名称</div>
<div class="abs" style="left:216.5px;top:707px;width:190.5px;height:70px;background:#3c3c3c"></div>
<div class="abs" style="left:231px;top:707px;width:176px;height:23.5px;background:#2e2e2e;border-left:1px solid #4a4a4a"></div>
<div class="abs" style="left:246px;top:730.5px;width:161px;height:23px;background:#424242;border-left:1px solid #525252"></div>
<div class="abs" style="left:246px;top:753.5px;width:161px;height:23.3px;background:#585858;border-left:1px solid #525252"></div>
<div class="abs" style="left:216.5px;top:776.8px;width:190.5px;height:21px;background:#303030"></div>
<svg style="left:221px;top:716px" width="6" height="6" viewBox="0 0 6 6"><path d="M0 5.4L5.4 0V5.4Z" fill="#585858"/></svg>
<div class="tt mono" style="left:235px;top:713px">Operation0</div>
<div class="tt mono" style="left:250px;top:735.5px">Animation00</div>
<div class="tt mono" style="left:250px;top:758.5px">Camera00</div>
<div class="abs" style="left:216.5px;top:797.6px;width:190.5px;height:17.4px;background:#444"></div>
<div class="abs" style="left:234px;top:803.2px;width:103px;height:6.8px;background:#303030"></div>
<svg style="left:221px;top:801px" width="182" height="11" viewBox="0 0 182 11"><path d="M6.2 1.2V9.8L0.9 5.5Z" fill="#d0d0d0"/><path d="M174.8 1.2V9.8L180.2 5.5Z" fill="#d0d0d0"/></svg>
<!-- right grid -->
<div class="abs" style="left:413.5px;top:663.5px;width:1032.5px;height:42.5px;background:#353535"></div>
<div class="abs" style="left:413.5px;top:706px;width:1032.5px;height:92px;background:#454545"></div>

<div class="num" style="left:415px;top:679px;color:#ececec;letter-spacing:0">00:00</div>
<div class="num" style="left:1015.3px;top:679px;color:#ececec;letter-spacing:0">01:00</div>
<svg style="left:413px;top:663px" width="1034" height="152" viewBox="413 663 1034 152">
 <defs><linearGradient id="gbar" x1="0" y1="0" x2="0" y2="1"><stop offset="0" stop-color="#f6f6f6"/><stop offset="0.6" stop-color="#e6e6e6"/><stop offset="1" stop-color="#cfcfcf"/></linearGradient>
 <linearGradient id="gop" x1="0" y1="0" x2="0" y2="1"><stop offset="0" stop-color="#b4b4b4"/><stop offset="1" stop-color="#8c8c8c"/></linearGradient></defs>
 <g stroke="#4d4d4d" stroke-width="1" fill="none">
  <path d="M413.5 729.5H1446M413.5 752.5H1446M413.5 775.5H1446"/>
  <path d="M563.5 707V798M713.5 707V798M863.5 707V798M1013.5 707V798M1163.5 707V798M1313.5 707V798"/>
  <path d="M1013.5 664V707" stroke="#444"/>
 </g>
 <path d="M415 714H714.4V722.2L709.6 718H419.8L415 722.2Z" fill="url(#gop)"/>
 <rect x="465.4" y="737.4" width="248.4" height="10" rx="3" fill="#2e2e2e" opacity="0.45"/>
 <rect x="465" y="736" width="248.3" height="9.8" rx="2.6" fill="url(#gbar)"/>
 <rect x="462" y="756.2" width="253.8" height="15.2" rx="4" fill="#8a8a8a"/>
 <rect x="465" y="759" width="248.3" height="9.8" rx="2.6" fill="url(#gbar)"/>
 <path d="M463.4 707V797.8" stroke="#0505f5" stroke-width="1.3"/>
 <path d="M493.6 707V797.8" stroke="#e00808" stroke-width="1.3"/>
</svg>
<!-- h scroll -->
<div class="abs" style="left:413.5px;top:798px;width:1032.5px;height:17px;background:#444"></div>
<div class="abs" style="left:432px;top:803.2px;width:15.2px;height:6.8px;background:#333"></div>
<svg style="left:420px;top:801px" width="1022" height="11" viewBox="0 0 1022 11"><path d="M5.6 1.2V9.8L0.3 5.5Z" fill="#d0d0d0"/><path d="M1014.8 1.2V9.8L1020.2 5.5Z" fill="#d0d0d0"/></svg>
<!-- v scroll -->
<div class="abs" style="left:1446px;top:663.5px;width:17.5px;height:151.5px;background:#444"></div>
<svg style="left:1449px;top:668px" width="11" height="126" viewBox="0 0 11 126"><path d="M0.8 7.2H10L5.4 2Z" fill="#a8a8a8"/><path d="M0.8 119.6H10L5.4 124.8Z" fill="#a8a8a8"/></svg>

<!-- bottom strip -->
<div class="abs" style="left:210px;top:817px;width:1257px;height:17px;background:#252525"></div>
<div class="abs" style="left:210px;top:834px;width:1262px;height:4px;background:#4b4b4b"></div>
<div class="abs" style="left:1467px;top:594px;width:4.5px;height:244px;background:#474747"></div>
<div class="abs" style="left:1446px;top:798px;width:17.5px;height:17px;background:#444"></div>
<!-- stray render artifacts present in the capture -->
<svg style="left:205px;top:655px" width="1265" height="184" viewBox="205 655 1265 184"><g stroke="#fff" stroke-width="1.1" fill="none">
<path d="M949.8 657.9H951M956.9 657.9H1016.8M1020 657.9H1249.3M1252.8 657.9H1433.5M1436.6 657.9H1466.6"/>
<path d="M210.5 671V753" stroke-width="1.6"/>
<path d="M210.4 815V836" stroke-dasharray="3 1.6 9 1.6 2 1.6"/>
</g></svg>
<!--TIMELINE-CONTENT-->

</div></div>
</body>
</html>
